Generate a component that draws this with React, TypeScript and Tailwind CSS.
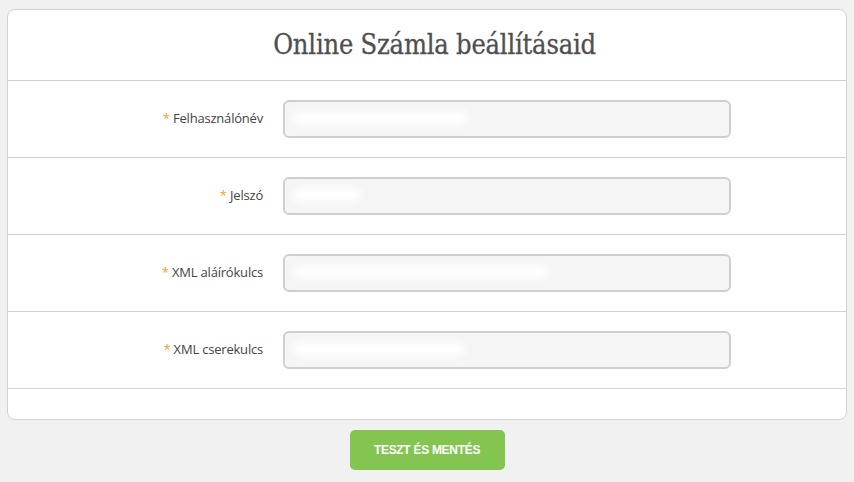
import React from "react";

const fields = [
  { label: "Felhasználónév", blur: "w-[175px]" },
  { label: "Jelszó", blur: "w-[68px]" },
  { label: "XML aláírókulcs", blur: "w-[255px]" },
  { label: "XML cserekulcs", blur: "w-[172px]" },
];

export default function App() {
  return (
    <div className="min-h-[482px] bg-[#f1f1f1] px-[7px] pt-[9px] font-['Open_Sans',sans-serif]">
      <div className="rounded-[8px] border border-[#d2d2d2] bg-white">
        <div className="flex h-[71px] items-center justify-center border-b border-[#cfcfcf] pl-[15px]">
          <h1 className="font-['DejaVu_Serif_Condensed','DejaVu_Serif',serif] text-[27px] tracking-[-0.2px] text-[#4f4f4f] [-webkit-text-stroke:0.3px_#4f4f4f]">Online Számla beállításaid</h1>
        </div>
        {fields.map((field) => (
          <div key={field.label} className="flex h-[77px] items-center border-b border-[#d2d2d2]">
            <label className="w-[255px] text-right text-[13px] tracking-[-0.2px] text-[#444444]">
              <span className="text-[#f0a030]">*</span> {field.label}
            </label>
            <div className="relative ml-[20px] h-[38px] w-[448px] overflow-hidden rounded-[6px] border-2 border-[#cfcfcf] bg-[#f5f5f5]">
              <div className={`absolute left-[8px] top-[9px] h-[14px] rounded-full bg-white blur-[4px] ${field.blur}`} />
            </div>
          </div>
        ))}
        <div className="h-[30px]" />
      </div>
      <div className="flex justify-center pt-[10px]">
        <button className="h-[40px] w-[155px] rounded-[5px] bg-[#84c552] font-['Liberation_Sans_Narrow','Liberation_Sans',sans-serif] text-[12px] font-bold tracking-[-0.3px] text-white">
          TESZT ÉS MENTÉS
        </button>
      </div>
    </div>
  );
}
